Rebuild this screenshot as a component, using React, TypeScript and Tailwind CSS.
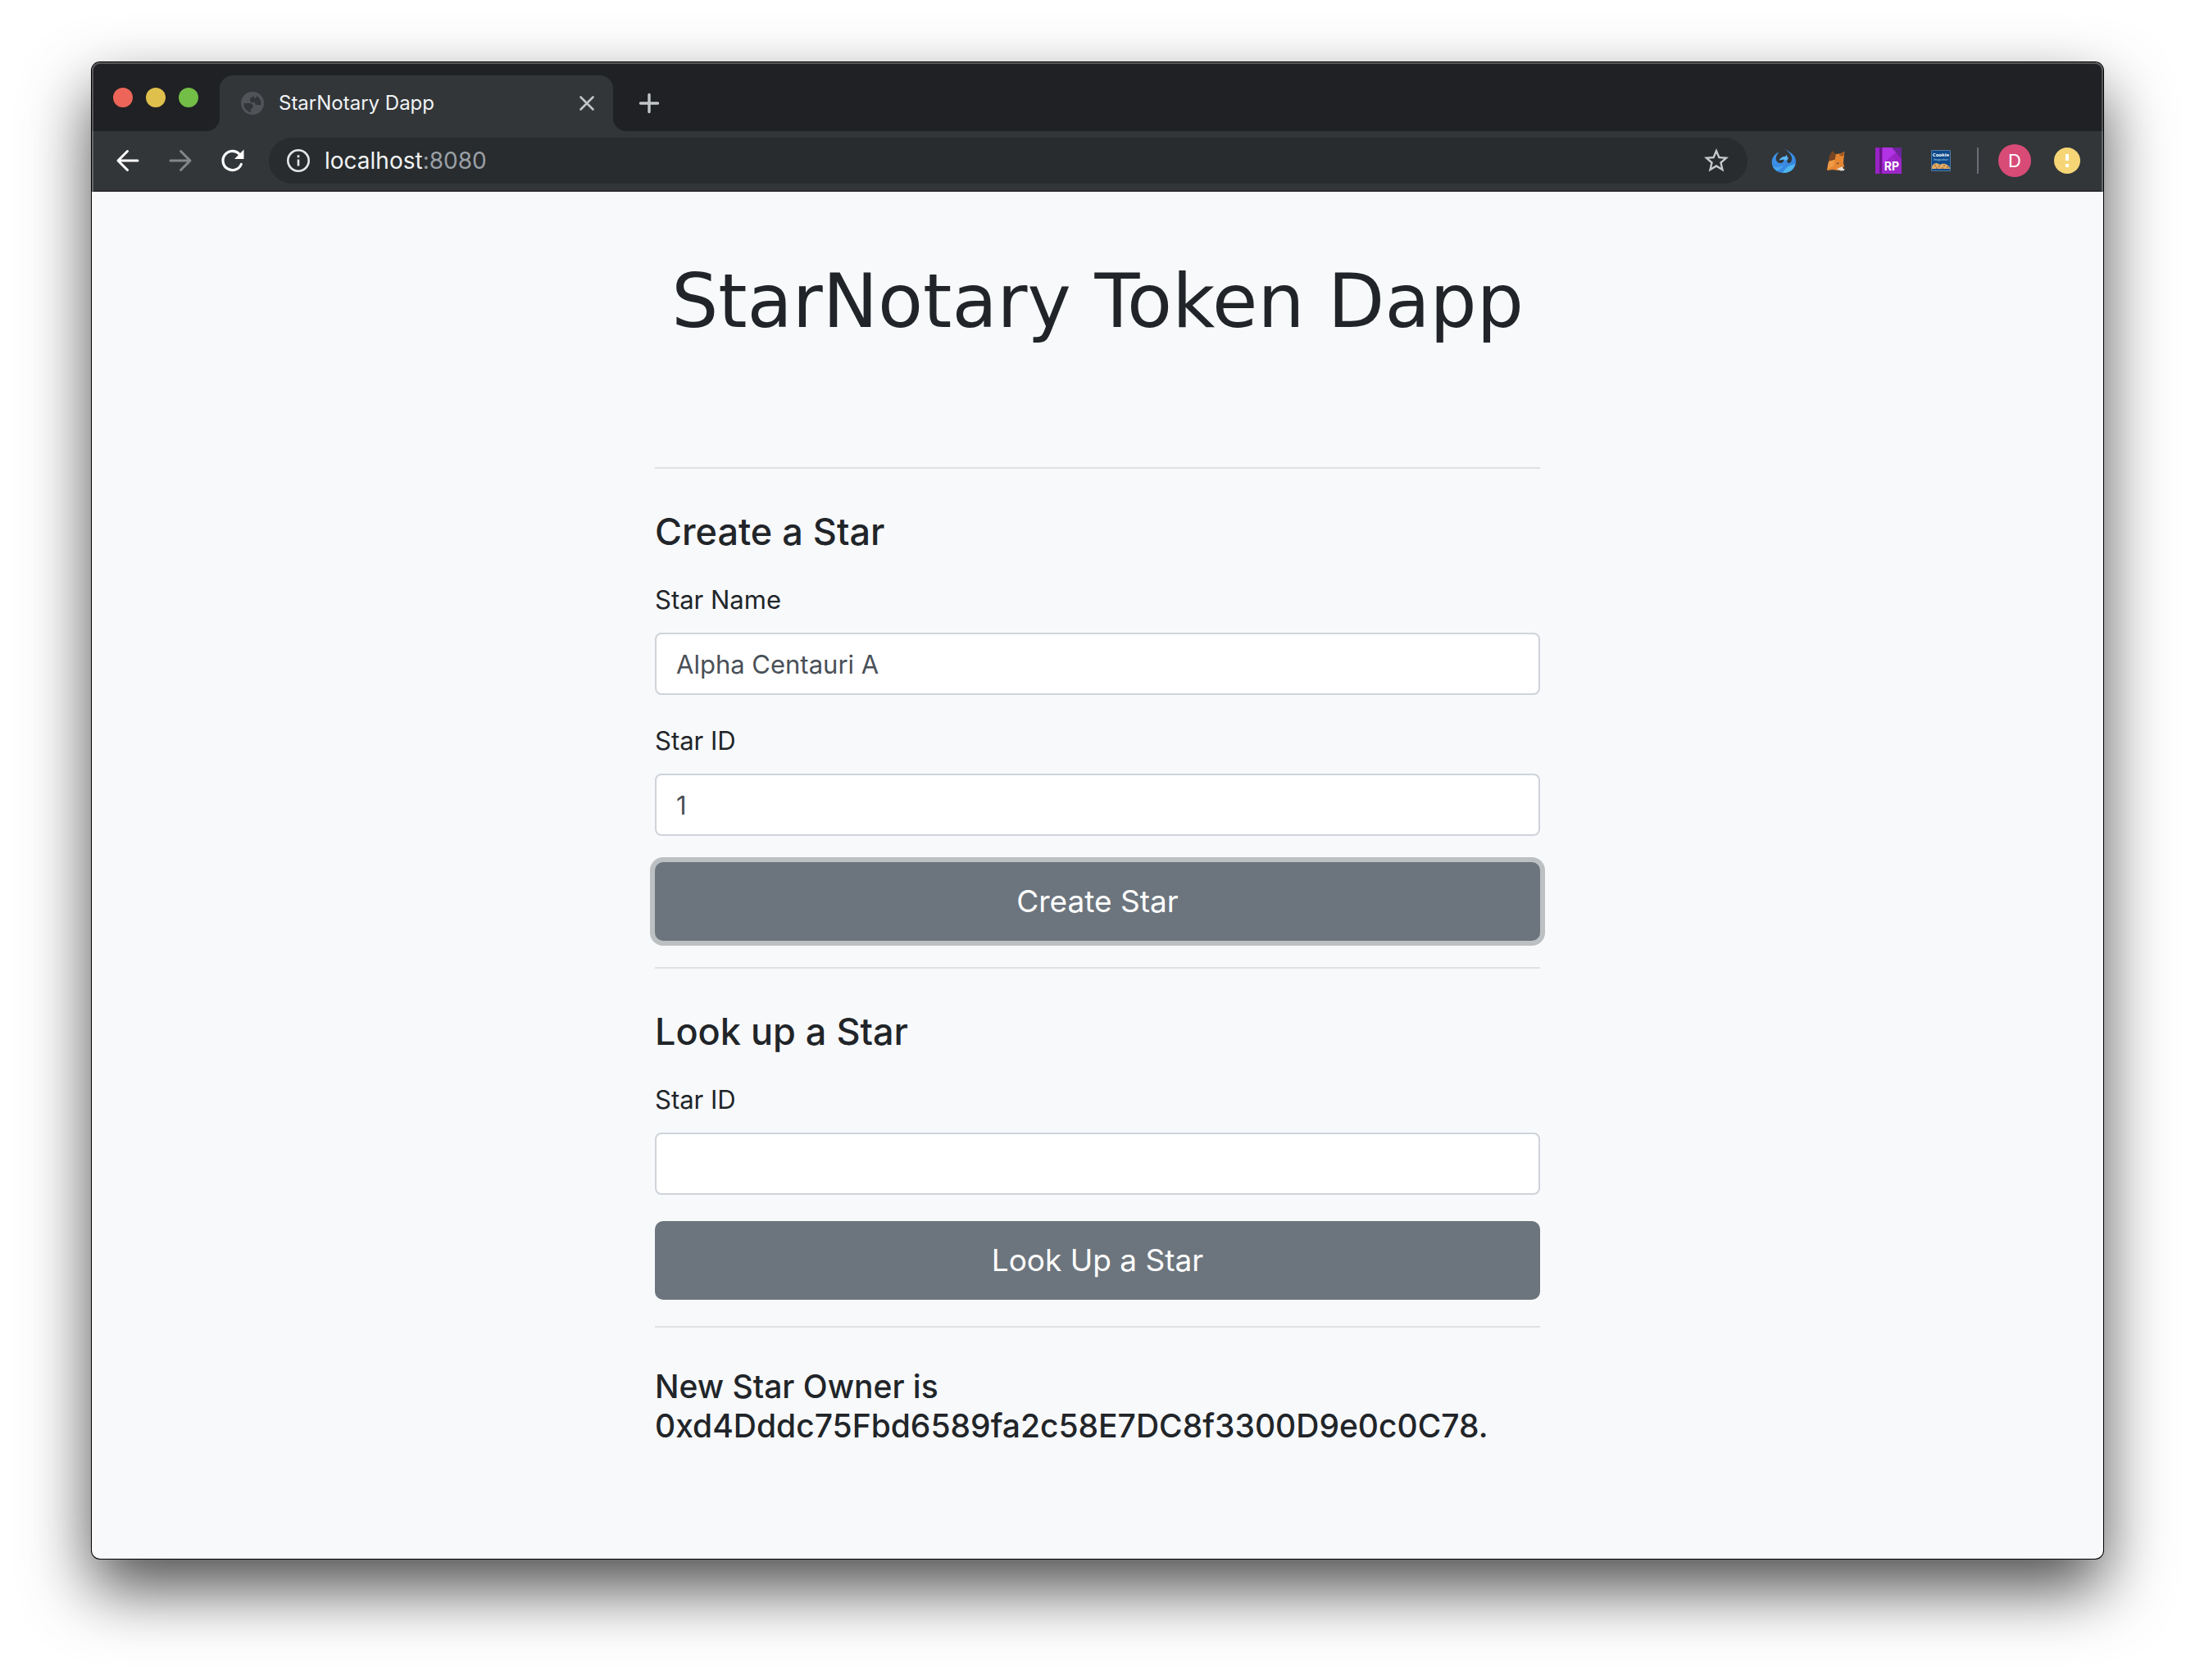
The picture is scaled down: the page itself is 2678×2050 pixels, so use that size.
import { useState, type ReactNode } from "react";

function IconButton({ label, className, children }: { label: string; className: string; children: ReactNode }) {
  return (
    <button type="button" aria-label={label} className={"flex shrink-0 items-center justify-center " + className}>
      {children}
    </button>
  );
}

function TabStrip() {
  return (
    <div className="flex h-[84px] items-end bg-[#202124] pl-4">
      <div className="flex h-[82px] w-[140px] shrink-0 items-center gap-4 pl-[10px]">
        <button type="button" aria-label="Close window" className="size-6 rounded-full bg-[#ed6559]" />
        <button type="button" aria-label="Minimize window" className="size-6 rounded-full bg-[#e0c04c]" />
        <button type="button" aria-label="Zoom window" className="size-6 rounded-full bg-[#72be47]" />
      </div>
      <div className="relative flex h-[68px] w-[480px] shrink-0 items-center rounded-t-2xl bg-[#323639] pl-[26px] pr-5">
        <svg className="absolute bottom-0 -left-4 size-4" viewBox="0 0 16 16" fill="#323639" aria-hidden="true">
          <path d="M16 0v16H0A16 16 0 0 0 16 0Z" />
        </svg>
        <svg className="absolute bottom-0 -right-4 size-4" viewBox="0 0 16 16" fill="#323639" aria-hidden="true">
          <path d="M0 0v16h16A16 16 0 0 1 0 0Z" />
        </svg>
        <svg className="size-7 shrink-0" viewBox="0 0 28 28" aria-hidden="true">
          <circle cx="14" cy="14" r="14" fill="#505357" />
          <path
            d="M16 3l-1 3c-2 0-4 1-4 4 0 2 1 3 4 3h2c0 2 1 3 3 3h4.500c.500-5-2-9-5.500-11 0 2-1 3-3 3Z"
            fill="#323639"
          />
          <path d="M3.500 14h7c3 0 4 1 4 4v2c-2 0-3 1-3 3l2 2C8 25 3 20 3.500 14Z" fill="#323639" />
        </svg>
        <span className="ml-[18px] flex-1 text-2xl text-[#f1f3f4]">StarNotary Dapp</span>
        <IconButton label="Close tab" className="size-6">
          <svg className="size-6" viewBox="0 0 24 24" stroke="#c3c6c9" strokeWidth="2.6" strokeLinecap="round">
            <path d="M4.500 4.500l15 15M19.500 4.500l-15 15" />
          </svg>
        </IconButton>
      </div>
      <IconButton label="New tab" className="ml-[28px] mb-[18px] size-8">
        <svg className="size-8" viewBox="0 0 32 32" stroke="#c3c6c9" strokeWidth="3.400" strokeLinecap="round">
          <path d="M16 5.500v21M5.500 16h21" />
        </svg>
      </IconButton>
    </div>
  );
}

function PhoenixIcon() {
  return (
    <svg className="size-8" viewBox="0 0 32 32" aria-hidden="true">
      <defs>
        <linearGradient id="phoenix" x1="0" y1="0" x2="1" y2="1">
          <stop offset="0" stopColor="#3f97ea" />
          <stop offset="1" stopColor="#3580dc" />
        </linearGradient>
      </defs>
      <path
        d="M10.700 5.500C4 8 1.500 14 1.700 18 2 26 8 31 16 31c9 0 15-6 15-14C31 9 25 6 16 1c8 5 11 10 10 14-.500 4-4 5-5.500 3-1-2 .500-3 1.500-5l-1.500-1L20 9l-2 2c-3 0-6 2-7.500 4.500L16 14.500c1 2.500-1 4.500-4 4.500-4 0-6-4-5-7.500.700-2.500 2-4.500 3.700-6Z"
        fill="url(#phoenix)"
      />
      <path d="M30.500 20C27 21 19 22 15 31c9 .500 14-5 15.500-11Z" fill="#4fb6ec" />
      <path d="M3 23c4 2 9 1 13-1-2 3-5 5-8 6.500C6 27 4 25 3 23Z" fill="#4aa9ee" />
      <path d="M10.500 15.500C12 13 15 11 18 11l2-2 .500 3 1.500 1-3 3-3-1.500Z" fill="#5cb7f0" />
    </svg>
  );
}

function FoxIcon() {
  return (
    <svg className="size-8" viewBox="0 0 32 32" aria-hidden="true">
      <path d="M8 15l7-7 6-.500 5.500-2.500-1 8-.500 6 1.500 5.500-.500 3-8 .500-6-1-7 1 1-6.500Z" fill="#e58633" />
      <path d="M11.700 4L16 8.500 14.500 15 7 17l1-7Z" fill="#7a4523" />
      <path d="M26.500 5l-5.500 3-1 2 5 .500Z" fill="#a3571f" />
      <path d="M17 26l6-2.500 3.500 1.500-.500 3-4 .500Z" fill="#e4ddd5" />
      <path d="M24.500 23.500l2.200.500-.300 2.500-1.400-.500Z" fill="#2a2320" />
      <path d="M16.500 18.500l3.500.500-2 1.500Z" fill="#5b4a36" />
      <path d="M7 17l7.500-2-1 7-8 5Z" fill="#f09a45" />
    </svg>
  );
}

function BookIcon() {
  return (
    <svg className="size-8" viewBox="0 0 32 32" aria-hidden="true">
      <rect width="32" height="32" fill="#9a22c4" />
      <path d="M9 0h23L9 20Z" fill="#b133e3" />
      <path d="M20 0h12v14Z" fill="#6d2499" />
      <path d="M9 20l12-9 11 8v13H9Z" fill="#9c27c9" />
      <path d="M5 0h3v32H5Z" fill="#6a148c" />
      <text
        x="20"
        y="28"
        textAnchor="middle"
        fontFamily="Inter, sans-serif"
        fontSize="14"
        fontWeight="700"
        fill="#fff"
      >
        RP
      </text>
    </svg>
  );
}

function CookieIcon() {
  return (
    <svg className="size-8" viewBox="0 0 32 32" aria-hidden="true">
      <rect x="4" y="3" width="24" height="26" rx="1" fill="#54789a" />
      <rect x="5" y="4" width="22" height="24" fill="#0d4a8c" />
      <text x="16" y="11" textAnchor="middle" fontFamily="Open Sans, sans-serif" fontSize="6" fontWeight="700" fill="#fff">
        Cookie
      </text>
      <text x="16" y="16" textAnchor="middle" fontFamily="Open Sans, sans-serif" fontSize="4" fill="#dbe8f5">
        Inspector
      </text>
      <path d="M5 25c0-4 3-6 6-6l4 2c3-2 9-2 12 4v1H5Z" fill="#e0aa66" />
      <path d="M8 22h2M13 23h2M19 22h2M23 24h2M10 25h2M17 25h2" stroke="#8a5424" strokeWidth="1" />
    </svg>
  );
}

function Toolbar() {
  return (
    <div className="flex h-[74px] items-center border-b-2 border-[#2b2c2f] bg-[#323639] pr-[28px] pl-7">
      <div className="flex shrink-0 items-center gap-8">
        <IconButton label="Back" className="size-8">
          <svg className="size-8" viewBox="0 0 32 32" fill="none" stroke="#fff" strokeWidth="3" strokeLinecap="round" strokeLinejoin="round">
            <path d="M28 16H4.500M15.500 4.500L4 16l11.500 11.500" />
          </svg>
        </IconButton>
        <IconButton label="Forward" className="size-8">
          <svg className="size-8" viewBox="0 0 32 32" fill="none" stroke="#84878a" strokeWidth="3" strokeLinecap="round" strokeLinejoin="round">
            <path d="M4 16h23.500M16.500 4.500L28 16 16.500 27.500" />
          </svg>
        </IconButton>
        <IconButton label="Reload" className="size-8">
          <svg className="size-8" viewBox="0 0 32 32" fill="none" stroke="#fff" strokeWidth="3.200">
            <path d="M26.300 20.500A11.600 11.600 0 1 1 24 8" strokeLinecap="round" />
            <path d="M29.500 2.500v11.500H18Z" fill="#fff" stroke="none" />
          </svg>
        </IconButton>
      </div>
      <div className="ml-7 flex h-14 min-w-0 flex-1 items-center rounded-full bg-[#282c2f] px-5">
        <IconButton label="View site information" className="size-8">
          <svg className="size-8" viewBox="0 0 32 32" fill="none" stroke="#e4e6e8" strokeWidth="2.600">
            <circle cx="16" cy="16" r="12.700" />
            <path d="M16 14.500v8M16 9.300v2.900" />
          </svg>
        </IconButton>
        <div className="ml-4 flex-1 text-[28px] text-[#9aa0a6]">
          <span className="text-[#f1f3f4]">localhost</span>:8080
        </div>
        <IconButton label="Bookmark this tab" className="size-9">
          <svg className="size-9" viewBox="0 0 24 24" fill="#c5c8cb">
            <path d="M22 9.240l-7.190-.62L12 2 9.190 8.630 2 9.240l5.460 4.730L5.820 21 12 17.270 18.180 21l-1.630-7.030L22 9.240zM12 15.400l-3.760 2.270 1-4.280-3.320-2.880 4.380-.38L12 6.100l1.710 4.040 4.380.38-3.320 2.880 1 4.280L12 15.400z" />
          </svg>
        </IconButton>
      </div>
      <div className="ml-7 flex shrink-0 items-center gap-8">
        <IconButton label="Phoenix wallet" className="size-8">
          <PhoenixIcon />
        </IconButton>
        <IconButton label="Fox wallet" className="size-8">
          <FoxIcon />
        </IconButton>
        <IconButton label="RP" className="size-8">
          <BookIcon />
        </IconButton>
        <IconButton label="Cookie Inspector" className="size-8">
          <CookieIcon />
        </IconButton>
      </div>
      <div className="ml-7 h-8 w-[2px] shrink-0 bg-[#6b6f73]" />
      <IconButton label="Profile" className="ml-6 size-10 rounded-full bg-[#d84b77] text-[22px] text-white">
        D
      </IconButton>
      <IconButton label="Update available" className="ml-7 size-8 rounded-full bg-[#f6d576]">
        <svg className="size-8" viewBox="0 0 32 32" fill="#fff">
          <path d="M14 8h4v8h-4ZM14 20h4v4h-4Z" />
        </svg>
      </IconButton>
    </div>
  );
}

function Field({ id, label, value, onChange }: { id: string; label: string; value: string; onChange: (v: string) => void }) {
  return (
    <div className="mb-8 flex flex-col gap-4">
      <label htmlFor={id} className="text-[31px] leading-[48px]">
        {label}
      </label>
      <input
        id={id}
        type="text"
        value={value}
        onChange={(e) => onChange(e.target.value)}
        className="h-[76px] w-full rounded-lg border-2 border-[#ced4da] bg-white px-6 text-[31px] text-[#495057] outline-none"
      />
    </div>
  );
}

const headingClass = "mt-12 mb-[30px] text-[45px] leading-[58px] font-medium";
const buttonClass = "h-24 w-full rounded-[10px] bg-[#6c757d] text-[37px] text-white";
const ruleClass = "border-t-2 border-[#dfe1e3]";

export default function App() {
  const [name, setName] = useState("Alpha Centauri A");
  const [starId, setStarId] = useState("1");
  const [lookupId, setLookupId] = useState("");

  return (
    <div className="min-h-screen bg-white px-28 pt-[76px] pb-[148px] font-['Inter',sans-serif]">
      <div className="flex min-h-[1826px] flex-col overflow-hidden rounded-[10px] bg-[#f8f9fb] shadow-[0_0_0_1px_#000,0_36px_80px_rgba(0,0,0,0.7)]">
        <div className="relative">
          <TabStrip />
          <Toolbar />
          <div className="pointer-events-none absolute inset-0 rounded-t-[10px] border-x-2 border-t-2 border-white/25" />
        </div>
        <main className="mx-auto w-full max-w-[1080px] flex-1 text-[#212529]">
          <h1 className="mt-[86px] mb-[154px] text-center font-['DejaVu_Sans',sans-serif] text-[90px] leading-[96px] font-normal whitespace-nowrap">
            StarNotary Token Dapp
          </h1>
          <hr className={ruleClass} />
          <form onSubmit={(e) => e.preventDefault()}>
            <h3 className={headingClass}>Create a Star</h3>
            <Field id="star-name" label="Star Name" value={name} onChange={setName} />
            <Field id="star-id" label="Star ID" value={starId} onChange={setStarId} />
            <button type="submit" className={buttonClass + " shadow-[0_0_0_6px_#bcc0c3]"}>
              Create Star
            </button>
          </form>
          <hr className={ruleClass + " mt-8"} />
          <form onSubmit={(e) => e.preventDefault()}>
            <h3 className={headingClass}>Look up a Star</h3>
            <Field id="lookup-id" label="Star ID" value={lookupId} onChange={setLookupId} />
            <button type="submit" className={buttonClass}>
              Look Up a Star
            </button>
          </form>
          <hr className={ruleClass + " mt-8"} />
          <p className="mt-12 text-[39px] leading-[48px] font-medium">
            New Star Owner is 0xd4Dddc75Fbd6589fa2c58E7DC8f3300D9e0c0C78.
          </p>
        </main>
      </div>
    </div>
  );
}
